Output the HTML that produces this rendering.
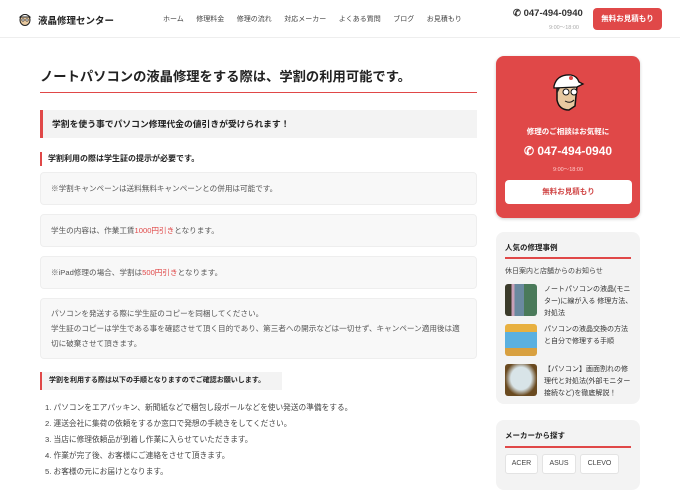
<!DOCTYPE html><html><head><meta charset="utf-8"><style>
*{margin:0;padding:0;box-sizing:border-box}
body{width:680px;height:480px;overflow:hidden;background:#fff;font-family:"Liberation Sans","Noto Sans CJK JP",sans-serif;color:#333;position:relative}
.a{position:absolute;white-space:nowrap}
.hd{position:absolute;left:0;top:0;width:680px;height:38px;border-bottom:1px solid #eee;background:#fff}
.nav span{margin-right:12.5px}
.box{position:absolute;left:40px;width:437px;background:#f8f8f8;border:1px solid #eee;border-radius:4px;font-size:7.6px;color:#555;padding:0 10px;line-height:15px;white-space:nowrap}
.li{position:absolute;left:45px;font-size:7.7px;color:#444;white-space:nowrap}
.card{position:absolute;left:496px;width:144px;background:#f3f3f3;border-radius:8px}
.th{position:absolute;left:9px;width:32px;height:32px;border-radius:3px}
.it{position:absolute;left:48px;font-size:7px;line-height:12px;color:#333;width:90px}
.tag{position:absolute;top:34px;height:20px;background:#fff;border:1px solid #e3e3e3;border-radius:3px;font-size:7px;text-align:center;line-height:18px;color:#444}
</style></head><body>
<div class="hd">
<svg class="a" style="left:18px;top:12px" width="14" height="14" viewBox="0 0 14 14"><ellipse cx="7" cy="8" rx="5" ry="5.5" fill="#e8c9a0" stroke="#222"/><path d="M2 5 Q7 0 12 5 Z" fill="#fff" stroke="#222"/><circle cx="5" cy="8" r="1.2" fill="#fff" stroke="#222" stroke-width=".6"/><circle cx="9" cy="8" r="1.2" fill="#fff" stroke="#222" stroke-width=".6"/></svg>
<div class="a" style="left:38px;top:13px;font-size:9.5px;font-weight:bold;color:#222">液晶修理センター</div>
<div class="a nav" style="left:163px;top:14px;font-size:7px;color:#444"><span>ホーム</span><span>修理料金</span><span>修理の流れ</span><span>対応メーカー</span><span>よくある質問</span><span>ブログ</span><span>お見積もり</span></div>
<div class="a" style="left:513px;top:8px;font-size:9.5px;font-weight:bold;color:#333">&#x2706; 047-494-0940</div>
<div class="a" style="left:549px;top:23px;font-size:5.5px;color:#aaa">9:00〜18:00</div>
<div class="a" style="left:593px;top:8px;width:69px;height:22px;background:#e04848;border-radius:4px;color:#fff;font-size:7.5px;font-weight:bold;text-align:center;line-height:22px">無料お見積もり</div>
</div>
<div class="a" style="left:40px;top:66px;font-size:13.3px;font-weight:bold;color:#222">ノートパソコンの液晶修理をする際は、学割の利用可能です。</div>
<div class="a" style="left:40px;top:92px;width:437px;height:1px;background:#e04848"></div>
<div class="a" style="left:40px;top:110px;width:437px;height:28px;background:#f3f3f3;border-left:3px solid #e04848;font-size:8.8px;font-weight:bold;color:#222;padding-left:9px;line-height:28px">学割を使う事でパソコン修理代金の値引きが受けられます！</div>
<div class="a" style="left:40px;top:152px;height:14px;border-left:2px solid #e04848;font-size:8px;font-weight:bold;color:#222;padding-left:6px;line-height:14px">学割利用の際は学生証の提示が必要です。</div>
<div class="box" style="top:172px;height:33px;line-height:31px">※学割キャンペーンは送料無料キャンペーンとの併用は可能です。</div>
<div class="box" style="top:214px;height:33px;line-height:31px">学生の内容は、作業工賃<span style="color:#e04848">1000円引き</span>となります。</div>
<div class="box" style="top:256px;height:33px;line-height:31px">※iPad修理の場合、学割は<span style="color:#e04848">500円引き</span>となります。</div>
<div class="box" style="top:298px;height:61px;padding-top:7px">パソコンを発送する際に学生証のコピーを同梱してください。<br>学生証のコピーは学生である事を確認させて頂く目的であり、第三者への開示などは一切せず、キャンペーン適用後は適<br>切に破棄させて頂きます。</div>
<div class="a" style="left:40px;top:372px;width:242px;height:18px;background:#f3f3f3;border-left:2px solid #e04848;font-size:7px;font-weight:bold;color:#222;padding-left:7px;line-height:18px">学割を利用する際は以下の手順となりますのでご確認お願いします。</div>
<div class="li" style="top:402px">1. パソコンをエアパッキン、新聞紙などで梱包し段ボールなどを使い発送の準備をする。</div>
<div class="li" style="top:418px">2. 運送会社に集荷の依頼をするか窓口で発想の手続きをしてください。</div>
<div class="li" style="top:434px">3. 当店に修理依頼品が到着し作業に入らせていただきます。</div>
<div class="li" style="top:450px">4. 作業が完了後、お客様にご連絡をさせて頂きます。</div>
<div class="li" style="top:466px">5. お客様の元にお届けとなります。</div>

<div class="a" style="left:496px;top:56px;width:144px;height:162px;background:#e04848;border-radius:8px;box-shadow:0 1px 3px rgba(0,0,0,.2)"></div>
<svg class="a" style="left:549px;top:72px" width="36" height="40" viewBox="0 0 36 40"><path d="M8 14 L8 28 Q10 38 20 38 L26 34 L28 14 Z" fill="#e8c9a0" stroke="#111" stroke-width="1.5"/><path d="M8 14 L8 22 L11 16 Z" fill="#222"/><path d="M5 14 Q8 2 22 3 Q28 4 30 10 L34 12 L28 15 L5 16 Z" fill="#fff" stroke="#111" stroke-width="1.3"/><circle cx="22" cy="6" r="2" fill="#e04848"/><circle cx="17" cy="20" r="3" fill="#fff" stroke="#111"/><circle cx="25" cy="20" r="3" fill="#fff" stroke="#111"/><path d="M16 29 Q21 32 25 28" stroke="#111" fill="none"/></svg>
<div class="a" style="left:496px;width:144px;top:126px;text-align:center;font-size:7.5px;font-weight:bold;color:#fff">修理のご相談はお気軽に</div>
<div class="a" style="left:496px;width:144px;top:144px;text-align:center;font-size:12px;font-weight:bold;color:#fff">&#x2706; 047-494-0940</div>
<div class="a" style="left:496px;width:144px;top:165px;text-align:center;font-size:5.5px;color:#fcc">9:00〜18:00</div>
<div class="a" style="left:505px;top:180px;width:127px;height:24px;background:#fff;border-radius:4px;text-align:center;line-height:24px;font-size:7.5px;font-weight:bold;color:#d04545">無料お見積もり</div>

<div class="card" style="top:232px;height:172px">
<div class="a" style="left:9px;top:10px;font-size:7.5px;font-weight:bold;color:#222">人気の修理事例</div>
<div class="a" style="left:9px;top:25px;width:126px;height:1.5px;background:#e04848"></div>
<div class="a" style="left:9px;top:34px;font-size:7px;color:#444">休日案内と店舗からのお知らせ</div>
<div class="th" style="top:52px;background:linear-gradient(90deg,#3a3a2a 0 20%,#c8a0b8 20% 30%,#6a8aa0 30% 60%,#4a7a5a 60%)"></div>
<div class="it" style="top:52px">ノートパソコンの液晶(モニター)に線が入る 修理方法、対処法</div>
<div class="th" style="top:92px;background:linear-gradient(180deg,#e8b040 0 25%,#5ab0e0 25% 75%,#d8a040 75%)"></div>
<div class="it" style="top:92px">パソコンの液晶交換の方法と自分で修理する手順</div>
<div class="th" style="top:132px;background:radial-gradient(ellipse at 50% 45%,#d8e4e8 0 45%,#6a4a20 70%)"></div>
<div class="it" style="top:132px">【パソコン】画面割れの修理代と対処法(外部モニター接続など)を徹底解説！</div>
</div>
<div class="card" style="top:420px;height:70px">
<div class="a" style="left:9px;top:10px;font-size:7.5px;font-weight:bold;color:#222">メーカーから探す</div>
<div class="a" style="left:9px;top:26px;width:126px;height:1.5px;background:#e04848"></div>
<div class="tag" style="left:9px;width:33px">ACER</div>
<div class="tag" style="left:46px;width:34px">ASUS</div>
<div class="tag" style="left:84px;width:39px">CLEVO</div>
</div>
</body></html>
